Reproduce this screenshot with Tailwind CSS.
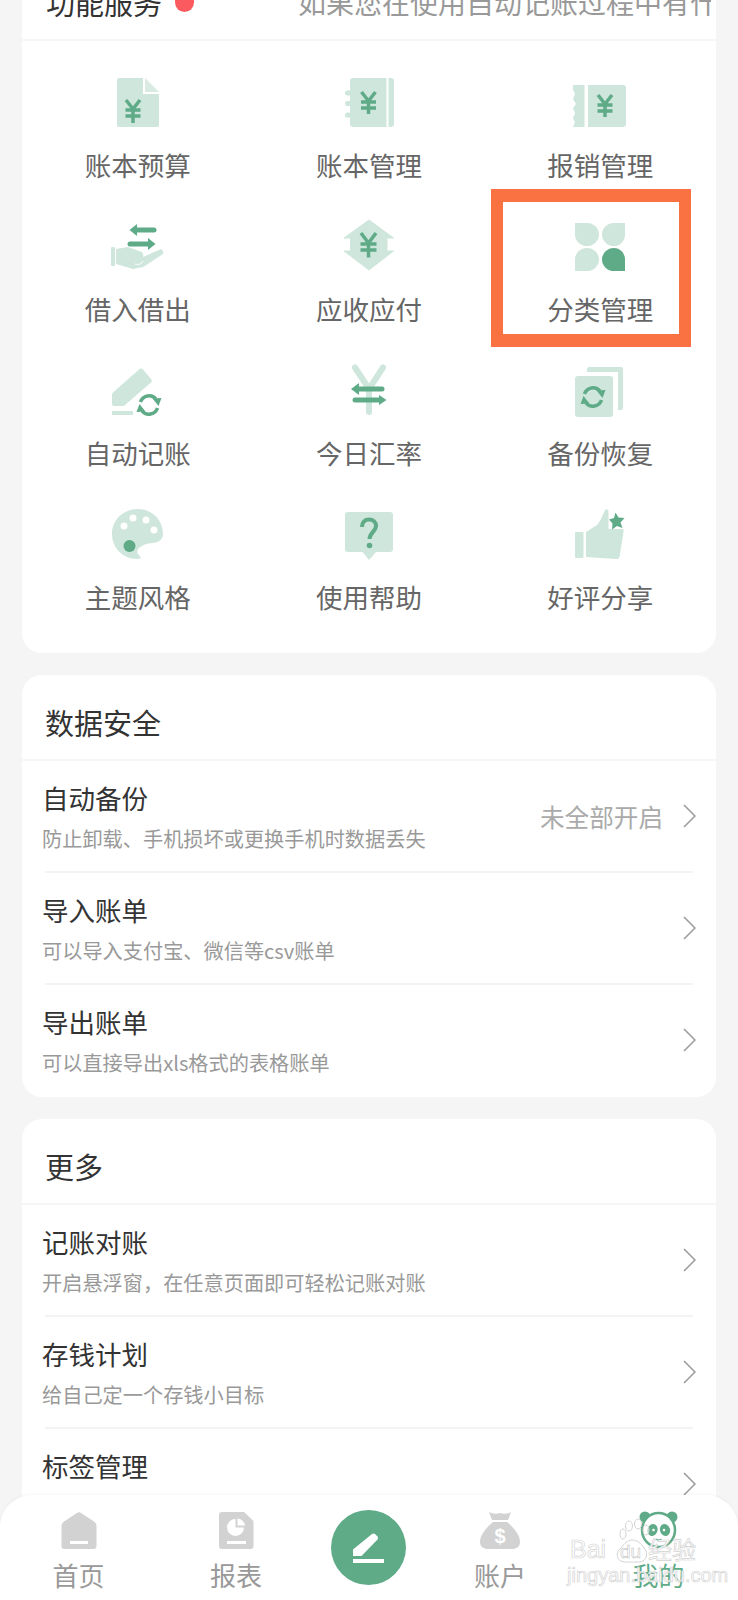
<!DOCTYPE html>
<html lang="zh">
<head>
<meta charset="utf-8">
<script src="https://cdn.jsdelivr.net/npm/@tailwindcss/browser@4"></script>
</head>
<body class="m-0">
<div class="relative w-[738px] h-[1600px] overflow-hidden bg-[#f5f5f5] font-['Noto_Sans_CJK_SC','Noto_Sans',sans-serif] text-[#333]">

  <!-- Cards -->
  <div class="flex flex-col gap-[22px] mx-[22px] -mt-[35px]">

    <section class="bg-white rounded-b-[20px]">
      <div class="h-[76px] flex items-center pl-[24px] pr-[5px] border-b-2 border-[#f6f6f6] overflow-hidden">
        <span class="text-[29px] leading-none whitespace-nowrap">功能服务</span>
        <span class="w-[19px] h-[20px] rounded-full bg-[#fb5a5f] ml-[13px] shrink-0"></span>
        <span class="ml-[104px] text-[28px] leading-none text-[#999] whitespace-nowrap overflow-hidden">如果您在使用自动记账过程中有什么问题</span>
      </div>
      <div class="grid grid-cols-3 gap-y-[31px] pt-[29px] pb-[38px] text-[26.5px] leading-[36px] text-[#666] text-center">

        <div class="flex flex-col items-center gap-[13px]">
          <svg class="w-[64px] h-[64px]" viewBox="0 0 64 64">
            <path d="M13 8H37V24H53V55a2 2 0 0 1-2 2H13a2 2 0 0 1-2-2V10a2 2 0 0 1 2-2Z" fill="#cfe6dc"/>
            <path d="M39 8L53 22H39Z" fill="#d9ebe3"/>
            <path d="M20 30L27 39L34 30M19.500 40H34.500M19.500 46H34.500M27 39V53" fill="none" stroke="#5fab88" stroke-width="3.500"/>
          </svg>
          <span>账本预算</span>
        </div>

        <div class="flex flex-col items-center gap-[13px]">
          <svg class="w-[64px] h-[64px]" viewBox="0 0 64 64">
            <path d="M16 8H54a3 3 0 0 1 3 3V54a3 3 0 0 1-3 3H16a3 3 0 0 1-3-3V11a3 3 0 0 1 3-3Z" fill="#cfe6dc"/>
            <rect x="8" y="20.500" width="7" height="5" rx="2.500" fill="#cfe6dc"/>
            <rect x="8" y="31" width="7" height="5" rx="2.500" fill="#cfe6dc"/>
            <rect x="8" y="42.500" width="7" height="5" rx="2.500" fill="#cfe6dc"/>
            <rect x="49.500" y="8" width="2" height="49" fill="#fff"/>
            <path d="M24.500 22L31.500 31L38.500 22M24 32H39M24 38H39M31.500 31V44" fill="none" stroke="#5fab88" stroke-width="3.500"/>
          </svg>
          <span>账本管理</span>
        </div>

        <div class="flex flex-col items-center gap-[13px]">
          <svg class="w-[64px] h-[64px]" viewBox="0 0 64 64">
            <path d="M5 15H16.500V57H5L7 52L5 48L7 43L5 38L8 34L5 29L7 24L5 20Z" fill="#cfe6dc"/>
            <path d="M20 15H55a3 3 0 0 1 3 3V54a3 3 0 0 1-3 3H20Z" fill="#cfe6dc"/>
            <path d="M30 25L37 34L44 25M29.500 35H44.500M29.500 41H44.500M37 34V47" fill="none" stroke="#5fab88" stroke-width="3.500"/>
          </svg>
          <span>报销管理</span>
        </div>

        <div class="flex flex-col items-center gap-[13px]">
          <svg class="w-[64px] h-[64px]" viewBox="0 0 64 64">
            <rect x="5" y="33" width="4" height="19" rx="1" fill="#cfe6dc"/>
            <path d="M10 35L22 33L35.700 38C37.500 39 37.500 42 37 43L54 35.500C56 34.500 58 38 57 40L37.300 53L27 55L10 50Z" fill="#cfe6dc"/>
            <path d="M29 50C33 51 36 50 37 47" fill="none" stroke="#fff" stroke-width="1"/>
            <path d="M23.500 16L31 10V22Z" fill="#5fab88"/>
            <path d="M30 16H48" fill="none" stroke="#5fab88" stroke-width="5" stroke-linecap="round"/>
            <path d="M49.500 30L42 24V36Z" fill="#5fab88"/>
            <path d="M24 30H43" fill="none" stroke="#5fab88" stroke-width="5" stroke-linecap="round"/>
          </svg>
          <span>借入借出</span>
        </div>

        <div class="flex flex-col items-center gap-[13px]">
          <svg class="w-[64px] h-[64px]" viewBox="0 0 64 64">
            <path d="M32 6L56.500 24H50V37H56.500L32 56L7 37H13.500V24H7Z" fill="#cfe6dc" stroke="#cfe6dc" stroke-width="1" stroke-linejoin="round"/>
            <path d="M24 19L31.500 29L39 19M23.500 30H39.500M23.500 36H39.500M31.500 29V43.500" fill="none" stroke="#5fab88" stroke-width="3.500"/>
          </svg>
          <span>应收应付</span>
        </div>

        <div class="flex flex-col items-center gap-[13px]">
          <svg class="w-[64px] h-[64px]" viewBox="0 0 64 64">
            <path d="M7 9H19A12 11.500 0 0 1 31 20.500A12 11.500 0 0 1 19 32A12 11.500 0 0 1 7 20.500Z" fill="#cfe6dc"/>
            <path d="M57 9H46A12 11.500 0 0 0 34 20.500A12 11.500 0 0 0 46 32A11 11.500 0 0 0 57 20.500Z" fill="#cfe6dc"/>
            <path d="M7 57H19A12 11.500 0 0 0 31 45.500A12 11.500 0 0 0 19 34A12 11.500 0 0 0 7 45.500Z" fill="#cfe6dc"/>
            <path d="M57 57H46A12 11.500 0 0 1 34 45.500A12 11.500 0 0 1 46 34A11 11.500 0 0 1 57 45.500Z" fill="#5fab88"/>
          </svg>
          <span>分类管理</span>
        </div>

        <div class="flex flex-col items-center gap-[13px]">
          <svg class="w-[64px] h-[64px]" viewBox="0 0 64 64">
            <path d="M33 11.500C34 10 36 10 37 11.500L45 21C46 22 46 23.500 45 24.500L19 47C18 48 17 48 16 48H8a2 2 0 0 1-2-2V37C6 36 6.500 35 7 34.500Z" fill="#cfe6dc"/>
            <rect x="6" y="53" width="21" height="4" fill="#cfe6dc"/>
            <circle cx="43" cy="47" r="14" fill="#fff"/>
            <g transform="translate(43 47)">
              <path d="M-8.500 -3A9 9 0 0 1 7 -6M8.500 3A9 9 0 0 1 -7 6" fill="none" stroke="#5fab88" stroke-width="3.500"/>
              <path d="M9.500 1L3.500 -6.500L12.500 -7ZM-9.500 -1L-3.500 6.500L-12.500 7Z" fill="#5fab88"/>
            </g>
          </svg>
          <span>自动记账</span>
        </div>

        <div class="flex flex-col items-center gap-[13px]">
          <svg class="w-[64px] h-[64px]" viewBox="0 0 64 64">
            <path d="M18 9.500L32 31L46 9.500M32 31V54" fill="none" stroke="#cfe6dc" stroke-width="6" stroke-linecap="round" stroke-linejoin="round"/>
            <path d="M14 31L22 25V37Z" fill="#5fab88"/>
            <path d="M21 31H45" fill="none" stroke="#5fab88" stroke-width="5" stroke-linecap="round"/>
            <path d="M49.500 42L42 37V47Z" fill="#5fab88"/>
            <path d="M18 42H43" fill="none" stroke="#5fab88" stroke-width="5" stroke-linecap="round"/>
          </svg>
          <span>今日汇率</span>
        </div>

        <div class="flex flex-col items-center gap-[13px]">
          <svg class="w-[64px] h-[64px]" viewBox="0 0 64 64">
            <path d="M21 9H53a2 2 0 0 1 2 2V50a2 2 0 0 1-2 2H50V14H19V11a2 2 0 0 1 2-2Z" fill="#cfe6dc"/>
            <rect x="7" y="18" width="38" height="41" rx="3" fill="#cfe6dc"/>
            <g transform="translate(25 39)">
              <path d="M-8.500 -3A9 9 0 0 1 7 -6M8.500 3A9 9 0 0 1 -7 6" fill="none" stroke="#5fab88" stroke-width="3.500"/>
              <path d="M9.500 1L3.500 -6.500L12.500 -7ZM-9.500 -1L-3.500 6.500L-12.500 7Z" fill="#5fab88"/>
            </g>
          </svg>
          <span>备份恢复</span>
        </div>

        <div class="flex flex-col items-center gap-[13px]">
          <svg class="w-[64px] h-[64px]" viewBox="0 0 64 64">
            <path d="M32 7C46 7 57 18 57 32C57 38 52 40.500 47 41C41 41.500 36 43 33 46C30 49 31 52 35 55C34 57 32 57 31 57C17 57 6 46 6 32C6 18 17 7 32 7Z" fill="#cfe6dc"/>
            <circle cx="18" cy="24" r="3.500" fill="#fff"/>
            <circle cx="27" cy="16" r="3.500" fill="#fff"/>
            <circle cx="40" cy="18" r="3.500" fill="#fff"/>
            <circle cx="48" cy="28" r="3.500" fill="#fff"/>
            <circle cx="23.500" cy="44" r="6" fill="#5fab88"/>
          </svg>
          <span>主题风格</span>
        </div>

        <div class="flex flex-col items-center gap-[13px]">
          <svg class="w-[64px] h-[64px]" viewBox="0 0 64 64">
            <path d="M11 10H53a3 3 0 0 1 3 3V47a3 3 0 0 1-3 3H39L32 58L25.500 50H11a3 3 0 0 1-3-3V13a3 3 0 0 1 3-3Z" fill="#cfe6dc"/>
            <path d="M25 25C25 20 28 17.500 32 17.500C36 17.500 39 20 39 24C39 29 32.500 31 32.500 37" fill="none" stroke="#5fab88" stroke-width="4"/>
            <circle cx="32.500" cy="43.500" r="2.800" fill="#5fab88"/>
          </svg>
          <span>使用帮助</span>
        </div>

        <div class="flex flex-col items-center gap-[13px]">
          <svg class="w-[64px] h-[64px]" viewBox="0 0 64 64">
            <rect x="7" y="30" width="8.500" height="26" rx="1" fill="#cfe6dc"/>
            <path d="M18 30L29 23C33 19 35 12 37 8C38 7 40 7 40.500 9L40.500 27H54C55.500 27 56 28 55.500 30L51.500 55C51 57 50 57 48 57L18 55Z" fill="#cfe6dc"/>
            <path d="M47.500 10.500L50.500 15.500L56.500 16L52.500 20.500L54.500 26L49 24L44 27.500L44.500 21.500L41 17.500L46 16Z" fill="#5fab88"/>
          </svg>
          <span>好评分享</span>
        </div>

      </div>
    </section>

    <section class="bg-white rounded-[20px]">
      <div class="h-[86px] flex items-center pl-[23px] pt-[10px] text-[29px] leading-none border-b-2 border-[#f6f6f6]">数据安全</div>
      <div class="flex flex-col px-[20px]">
        <div class="h-[110px] flex items-center">
          <div class="flex-1 flex flex-col">
            <span class="text-[26.5px] leading-[36px]">自动备份</span>
            <span class="text-[20.2px] leading-[28px] mt-[9px] text-[#999]">防止卸载、手机损坏或更换手机时数据丢失</span>
          </div>
          <span class="text-[24.6px] text-[#aaa] mr-[20px]">未全部开启</span>
          <svg class="w-[13px] h-[24px]" viewBox="0 0 13 24"><path d="M1 1L12 12L1 23" fill="none" stroke="#999" stroke-width="1.500"/></svg>
        </div>
        <div class="h-[2px] mx-[3px] bg-[#f3f3f3]"></div>
        <div class="h-[110px] flex items-center">
          <div class="flex-1 flex flex-col">
            <span class="text-[26.5px] leading-[36px]">导入账单</span>
            <span class="text-[20.2px] leading-[28px] mt-[9px] text-[#999]">可以导入支付宝、微信等csv账单</span>
          </div>
          <svg class="w-[13px] h-[24px]" viewBox="0 0 13 24"><path d="M1 1L12 12L1 23" fill="none" stroke="#999" stroke-width="1.500"/></svg>
        </div>
        <div class="h-[2px] mx-[3px] bg-[#f3f3f3]"></div>
        <div class="h-[112px] pb-[2px] flex items-center">
          <div class="flex-1 flex flex-col">
            <span class="text-[26.5px] leading-[36px]">导出账单</span>
            <span class="text-[20.2px] leading-[28px] mt-[9px] text-[#999]">可以直接导出xls格式的表格账单</span>
          </div>
          <svg class="w-[13px] h-[24px]" viewBox="0 0 13 24"><path d="M1 1L12 12L1 23" fill="none" stroke="#999" stroke-width="1.500"/></svg>
        </div>
      </div>
    </section>

    <section class="bg-white rounded-[20px]">
      <div class="h-[86px] flex items-center pl-[23px] pt-[10px] text-[29px] leading-none border-b-2 border-[#f6f6f6]">更多</div>
      <div class="flex flex-col px-[20px]">
        <div class="h-[110px] flex items-center">
          <div class="flex-1 flex flex-col">
            <span class="text-[26.5px] leading-[36px]">记账对账</span>
            <span class="text-[20.2px] leading-[28px] mt-[9px] text-[#999]">开启悬浮窗，在任意页面即可轻松记账对账</span>
          </div>
          <svg class="w-[13px] h-[24px]" viewBox="0 0 13 24"><path d="M1 1L12 12L1 23" fill="none" stroke="#999" stroke-width="1.500"/></svg>
        </div>
        <div class="h-[2px] mx-[3px] bg-[#f3f3f3]"></div>
        <div class="h-[110px] flex items-center">
          <div class="flex-1 flex flex-col">
            <span class="text-[26.5px] leading-[36px]">存钱计划</span>
            <span class="text-[20.2px] leading-[28px] mt-[9px] text-[#999]">给自己定一个存钱小目标</span>
          </div>
          <svg class="w-[13px] h-[24px]" viewBox="0 0 13 24"><path d="M1 1L12 12L1 23" fill="none" stroke="#999" stroke-width="1.500"/></svg>
        </div>
        <div class="h-[2px] mx-[3px] bg-[#f3f3f3]"></div>
        <div class="h-[110px] flex items-center">
          <div class="flex-1 flex flex-col">
            <span class="text-[26.5px] leading-[36px]">标签管理</span>
            <span class="text-[20.2px] leading-[28px] mt-[9px] text-[#999]">&nbsp;</span>
          </div>
          <svg class="w-[13px] h-[24px]" viewBox="0 0 13 24"><path d="M1 1L12 12L1 23" fill="none" stroke="#999" stroke-width="1.500"/></svg>
        </div>
      </div>
    </section>
  </div>

  <!-- Highlight frame -->
  <div class="absolute left-[491px] top-[189px] w-[200px] h-[158px] border-x-[12px] border-y-[13px] border-[#fb7242]"></div>

  <!-- Bottom nav -->
  <nav class="absolute left-0 right-0 bottom-0 h-[105px] bg-white rounded-t-[32px] shadow-[0_-1px_3px_rgba(0,0,0,0.04)] grid grid-cols-[157px_158px_106px_158px_159px] pt-[11px] text-[26px] leading-[32px] text-[#999] text-center">
    <div class="flex flex-col items-center gap-[5px]">
      <svg class="w-[48px] h-[48px]" viewBox="0 0 48 48">
        <path d="M22 7Q24 5.500 26 7L39 15.500Q41.500 17.500 41.500 20V40Q41.500 43 38.500 43H9.500Q6.500 43 6.500 40V20Q6.500 17.500 9 15.500Z" fill="#d2d2d2"/>
        <rect x="15" y="35" width="18" height="3" fill="#fff"/>
      </svg>
      <span>首页</span>
    </div>
    <div class="flex flex-col items-center gap-[5px]">
      <svg class="w-[48px] h-[48px]" viewBox="0 0 48 48">
        <path d="M10 6H32L41.500 15V40Q41.500 43 38.500 43H10Q7 43 7 40V9Q7 6 10 6Z" fill="#d2d2d2"/>
        <path d="M23.500 13A8.500 8.500 0 1 0 32 21.500H23.500Z" fill="#fff"/>
        <path d="M25.500 12.500A8 8 0 0 1 33 19.500H25.500Z" fill="#fff"/>
        <rect x="15" y="35" width="19" height="3" fill="#fff"/>
      </svg>
      <span>报表</span>
    </div>
    <div class="relative flex justify-center">
      <div class="absolute top-[4px] w-[75px] h-[75px] rounded-full bg-[#5fab88] flex items-center justify-center">
        <svg class="w-[40px] h-[40px]" viewBox="0 0 40 40">
          <path d="M5 21.500L24 6Q25.500 5 27 6L29.500 8.500Q30.500 10 29.500 11.500L13.500 28H5Z" fill="#fff"/>
          <rect x="5" y="31" width="31" height="4" fill="#fff"/>
        </svg>
      </div>
    </div>
    <div class="flex flex-col items-center gap-[5px]">
      <svg class="w-[48px] h-[48px]" viewBox="0 0 48 48">
        <path d="M13 6Q18 9 24 7Q30 9 35 6L32 14H16Z" fill="#d2d2d2"/>
        <path d="M17 16H31C38 22 44 29 44 36C44 41 40 43 36 43H12C8 43 4 41 4 36C4 29 10 22 17 16Z" fill="#d2d2d2"/>
        <text x="24" y="37" text-anchor="middle" font-size="20" font-weight="700" font-family="Liberation Sans" fill="#fff">$</text>
      </svg>
      <span>账户</span>
    </div>
    <div class="flex flex-col items-center gap-[5px] text-[#5fab88]">
      <svg class="w-[48px] h-[48px]" viewBox="0 0 48 48">
        <circle cx="10" cy="11" r="5.500" fill="#5fab88"/>
        <circle cx="37" cy="11" r="5.500" fill="#5fab88"/>
        <ellipse cx="23.500" cy="24" rx="16.500" ry="17" fill="#fff" stroke="#5fab88" stroke-width="2.500"/>
        <ellipse cx="17.500" cy="24" rx="5" ry="6" fill="#5fab88" transform="rotate(20 17.500 24)"/>
        <ellipse cx="30" cy="24" rx="5" ry="6" fill="#5fab88" transform="rotate(-20 30 24)"/>
        <circle cx="18.500" cy="24" r="1.300" fill="#fff"/>
        <circle cx="29" cy="24" r="1.300" fill="#fff"/>
        <path d="M20.500 33Q23.500 35 26.500 33" fill="none" stroke="#5fab88" stroke-width="1.500"/>
      </svg>
      <span>我的</span>
    </div>
  </nav>

  <!-- Watermark -->
  <div class="absolute left-[567px] top-[1510px] w-[135px] h-[78px] text-white/85 [-webkit-text-stroke:0.7px_#d4d4d4] font-['Liberation_Sans',sans-serif]">
    <svg class="absolute left-[48px] top-0 w-[52px] h-[60px]" viewBox="0 0 52 60">
      <g fill="#fff" fill-opacity="0.5" stroke="#d4d4d4" stroke-width="1">
        <ellipse cx="8" cy="24" rx="3" ry="5"/>
        <ellipse cx="14" cy="16" rx="3.500" ry="5"/>
        <ellipse cx="23" cy="14" rx="3.500" ry="5"/>
        <ellipse cx="31" cy="20" rx="3" ry="5"/>
        <path d="M17 30C22 30 26 33 29 38C33 41 33 52 24 52H10C1 52 0 42 6 38C9 34 12 30 17 30Z"/>
      </g>
    </svg>
    <span class="absolute left-[3px] top-[24px] text-[25px] leading-[30px]">Bai</span>
    <span class="absolute left-[53px] top-[31px] text-[19px] leading-[22px] [-webkit-text-stroke:0.5px_#bbb]">du</span>
    <span class="absolute left-[81px] top-[25px] text-[24px] leading-[28px] font-['Noto_Sans_CJK_SC',sans-serif]">经验</span>
    <span class="absolute left-0 top-[54px] text-[20px] leading-[22px] whitespace-nowrap">jingyan.baidu.com</span>
  </div>
</div>
</body>
</html>
